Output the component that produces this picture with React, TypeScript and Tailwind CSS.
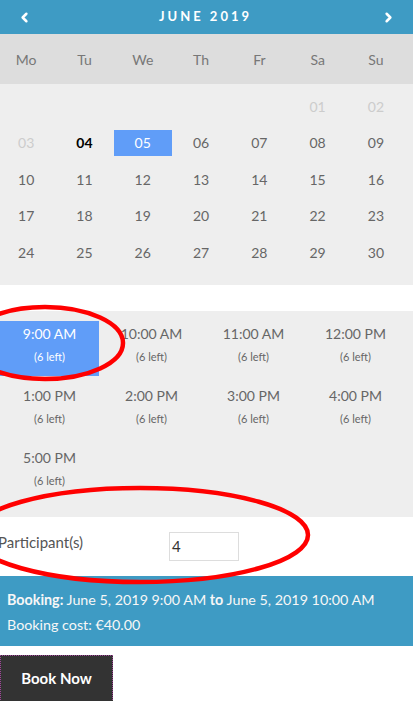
import { ChevronLeft, ChevronRight } from "lucide-react";

const weekdays = ["Mo", "Tu", "We", "Th", "Fr", "Sa", "Su"];

type Day = { label: string; state?: "off" | "today" | "selected" };

const weeks: Day[][] = [
  [
    { label: "" }, { label: "" }, { label: "" }, { label: "" }, { label: "" },
    { label: "01", state: "off" }, { label: "02", state: "off" },
  ],
  [
    { label: "03", state: "off" }, { label: "04", state: "today" }, { label: "05", state: "selected" },
    { label: "06" }, { label: "07" }, { label: "08" }, { label: "09" },
  ],
  ["10", "11", "12", "13", "14", "15", "16"].map((l) => ({ label: l })),
  ["17", "18", "19", "20", "21", "22", "23"].map((l) => ({ label: l })),
  ["24", "25", "26", "27", "28", "29", "30"].map((l) => ({ label: l })),
];

const slots = [
  "9:00 AM", "10:00 AM", "11:00 AM", "12:00 PM",
  "1:00 PM", "2:00 PM", "3:00 PM", "4:00 PM",
  "5:00 PM",
];

export default function App() {
  return (
    <div className="relative w-[416px] h-[701px] overflow-hidden bg-white font-['Lato','Open_Sans',sans-serif]">
      <div className="w-[413px]">

        {/* Month header */}
        <div className="h-[34px] flex items-center justify-between px-[17px] bg-[#3e9bc4] text-white">
          <ChevronLeft size={15} strokeWidth={4} />
          <span className="text-[13px] font-bold tracking-[3px] mr-[2px]">JUNE 2019</span>
          <ChevronRight size={15} strokeWidth={4} />
        </div>

        {/* Weekdays */}
        <div className="h-[50px] bg-[#dddddd]">
          <div className="-ml-[3px] h-full grid grid-cols-[repeat(7,58.3px)] items-center text-[14px] text-[#777]">
            {weekdays.map((d) => (
              <span key={d} className="text-center">{d}</span>
            ))}
          </div>
        </div>

        {/* Days */}
        <div className="bg-[#eeeeee] pt-[4px] pb-[14px]">
          {weeks.map((week, i) => (
            <div key={i} className="-ml-[3px] h-[36.5px] grid grid-cols-[repeat(7,58.3px)] items-center text-[14px]">
              {week.map((day, j) => (
                <div key={j} className="flex justify-center">
                  {day.state === "selected" ? (
                    <span className="w-[58px] h-[26px] flex items-center justify-center bg-[#609df8] text-white">
                      {day.label}
                    </span>
                  ) : (
                    <span
                      className={
                        day.state === "off"
                          ? "text-[#cccccc]"
                          : day.state === "today"
                          ? "text-black font-bold"
                          : "text-[#666]"
                      }
                    >
                      {day.label}
                    </span>
                  )}
                </div>
              ))}
            </div>
          ))}
        </div>

        <div className="h-[26px]" />

        {/* Time slots */}
        <div className="bg-[#eeeeee] pt-[10px] h-[206px]">
          <div className="grid grid-cols-[repeat(4,102px)] gap-y-[7px]">
            {slots.map((s, i) => (
              <div
                key={s}
                className={`w-[99px] h-[55px] flex flex-col items-center pt-[4px] ${
                  i === 0 ? "bg-[#609df8] text-white" : "text-[#666]"
                }`}
              >
                <span className="text-[14px] leading-[18px]">{s}</span>
                <span className="text-[11px] leading-[14px] mt-[7px]">(6 left)</span>
              </div>
            ))}
          </div>
        </div>

        {/* Participants */}
        <div className="h-[59px] flex items-start pt-[14px]">
          <span className="-ml-[2px] w-[171px] text-[15px] text-[#555]">Participant(s)</span>
          <div className="mt-[1px] w-[70px] h-[29px] border border-[#dddddd] bg-white flex items-center pl-[2px] text-[15px] text-[#333]">
            4
          </div>
        </div>

        {/* Booking summary */}
        <div className="h-[70px] bg-[#3e9bc4] px-[7px] pt-[11px] text-[14.3px] leading-[25px] text-[#f7f7f7]">
          <p>
            <span className="font-bold">Booking:</span> June 5, 2019 9:00 AM{" "}
            <span className="font-bold">to</span> June 5, 2019 10:00 AM
          </p>
          <p>Booking cost: €40.00</p>
        </div>

        {/* Book now */}
        <div className="pt-[9px]">
          <button
            type="button"
            className="w-[113px] h-[47px] flex items-center justify-center bg-[#333333] text-white text-[15px] font-bold outline-1 outline-dotted outline-[#a0469a] -outline-offset-1"
          >
            Book Now
          </button>
        </div>
      </div>

      {/* Red annotation ellipses */}
      <svg className="absolute inset-0 pointer-events-none" width="416" height="701">
        <ellipse cx="45" cy="343" rx="78" ry="36" fill="none" stroke="#ff0000" strokeWidth="4.5" />
        <ellipse cx="140" cy="535" rx="168" ry="47" fill="none" stroke="#ff0000" strokeWidth="4.5" />
      </svg>
    </div>
  );
}
